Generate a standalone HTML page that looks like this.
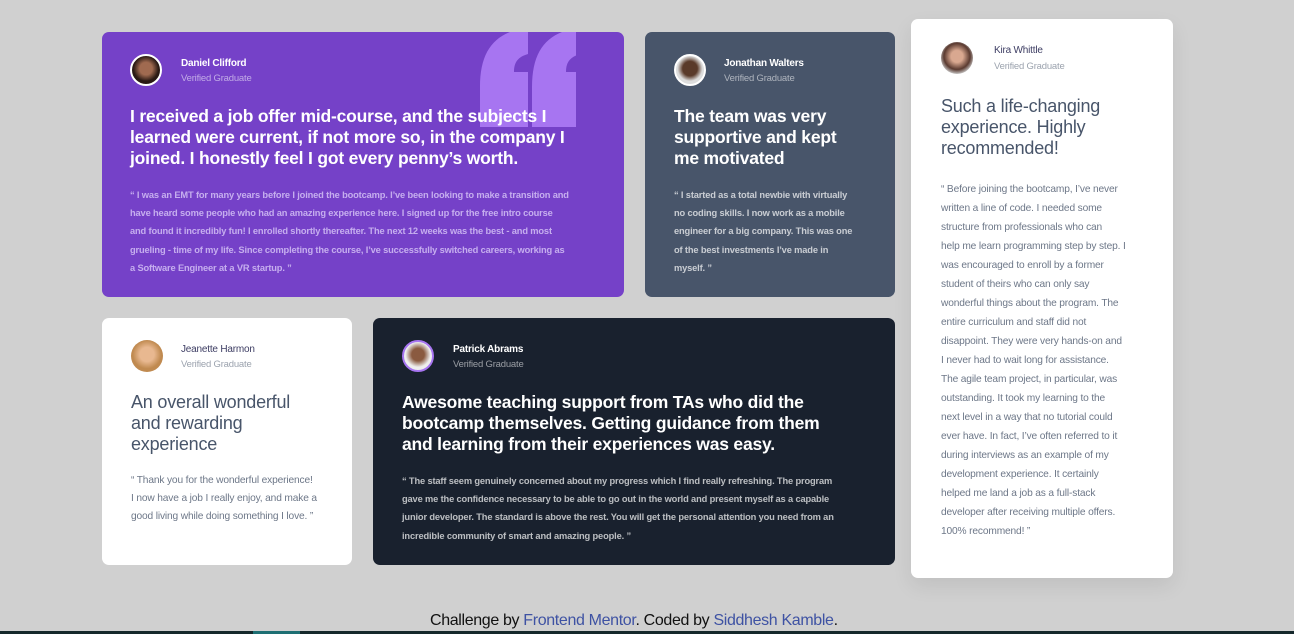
<!DOCTYPE html>
<html><head><meta charset="utf-8"><style>
*{margin:0;padding:0;box-sizing:border-box}
body{width:1294px;height:634px;background:#d0d0d0;font-family:"Liberation Sans",sans-serif;position:relative;overflow:hidden}
.c{position:absolute;border-radius:7px;overflow:hidden}
.av{position:absolute;width:32px;height:32px;border-radius:50%;border:2px solid #fff}
.nm{position:absolute;font-size:10px;font-weight:bold;white-space:nowrap;letter-spacing:-0.2px}
.vg{position:absolute;font-size:9.5px;white-space:nowrap;opacity:.55;letter-spacing:-0.2px}
.t{position:absolute;font-size:18px;line-height:21px;white-space:nowrap;letter-spacing:-0.2px}
.b{position:absolute;font-size:9.3px;line-height:18.2px;white-space:nowrap;opacity:.7;font-weight:bold;letter-spacing:-0.15px}
.w .t{color:#48556a;font-weight:normal}
.w .b{color:#48556a;font-weight:normal;opacity:.8;font-size:10.2px}
.w .nm{color:#3d3d63;font-weight:normal}
.w .vg{color:#48556a}
.d{color:#fff}
.d .t{font-weight:bold;font-size:17.5px}
</style></head><body>

<div class="c d" style="left:102px;top:32px;width:522px;height:265px;background:#7541c8">
<svg style="position:absolute;left:378px;top:0" width="96" height="95" viewBox="0 0 96 95"><path d="M0 95V55C0 25 10 8 30 0h18v22c-10 3-14 8-14 18h14v55z" fill="#a775f1"/><path d="M48 95V55c0-30 10-47 30-55h18v22c-10 3-14 8-14 18h14v55z" fill="#a775f1" transform="translate(4 0)"/></svg>
<div class="av" style="left:28px;top:22px;background:radial-gradient(circle at 50% 45%,#a06a50 30%,#2a1a14 60%)"></div>
<div class="nm" style="left:79px;top:26px">Daniel Clifford</div>
<div class="vg" style="left:79px;top:41px">Verified Graduate</div>
<div class="t" style="left:28px;top:74px">I received a job offer mid-course, and the subjects I<br>learned were current, if not more so, in the company I<br>joined. I honestly feel I got every penny’s worth.</div>
<div class="b" style="left:28px;top:154px;color:#e8dcff">“ I was an EMT for many years before I joined the bootcamp. I’ve been looking to make a transition and<br>have heard some people who had an amazing experience here. I signed up for the free intro course<br>and found it incredibly fun! I enrolled shortly thereafter. The next 12 weeks was the best - and most<br>grueling - time of my life. Since completing the course, I’ve successfully switched careers, working as<br>a Software Engineer at a VR startup. ”</div>
</div>

<div class="c d" style="left:645px;top:32px;width:250px;height:265px;background:#48556a">
<div class="av" style="left:29px;top:22px;background:radial-gradient(circle at 50% 45%,#5a3a2a 35%,#ddd 60%)"></div>
<div class="nm" style="left:79px;top:26px">Jonathan Walters</div>
<div class="vg" style="left:79px;top:41px">Verified Graduate</div>
<div class="t" style="left:29px;top:74px">The team was very<br>supportive and kept<br>me motivated</div>
<div class="b" style="left:29px;top:154px;color:#fff">“ I started as a total newbie with virtually<br>no coding skills. I now work as a mobile<br>engineer for a big company. This was one<br>of the best investments I’ve made in<br>myself. ”</div>
</div>

<div class="c w" style="left:911px;top:19px;width:262px;height:559px;background:#fff;box-shadow:0 8px 20px rgba(0,0,0,.08)">
<div class="av" style="left:30px;top:23px;border:none;background:radial-gradient(circle at 50% 45%,#d9a890 25%,#5a3a30 55%,#ccc 75%)"></div>
<div class="nm" style="left:83px;top:26px">Kira Whittle</div>
<div class="vg" style="left:83px;top:42px">Verified Graduate</div>
<div class="t" style="left:30px;top:77px">Such a life-changing<br>experience. Highly<br>recommended!</div>
<div class="b" style="left:30px;top:161px;line-height:19px">“ Before joining the bootcamp, I’ve never<br>written a line of code. I needed some<br>structure from professionals who can<br>help me learn programming step by step. I<br>was encouraged to enroll by a former<br>student of theirs who can only say<br>wonderful things about the program. The<br>entire curriculum and staff did not<br>disappoint. They were very hands-on and<br>I never had to wait long for assistance.<br>The agile team project, in particular, was<br>outstanding. It took my learning to the<br>next level in a way that no tutorial could<br>ever have. In fact, I’ve often referred to it<br>during interviews as an example of my<br>development experience. It certainly<br>helped me land a job as a full-stack<br>developer after receiving multiple offers.<br>100% recommend! ”</div>
</div>

<div class="c w" style="left:102px;top:318px;width:250px;height:247px;background:#fff">
<div class="av" style="left:29px;top:22px;border:none;background:radial-gradient(circle at 50% 45%,#e8b890 30%,#c08a50 60%)"></div>
<div class="nm" style="left:79px;top:26px">Jeanette Harmon</div>
<div class="vg" style="left:79px;top:41px">Verified Graduate</div>
<div class="t" style="left:29px;top:74px">An overall wonderful<br>and rewarding<br>experience</div>
<div class="b" style="left:29px;top:154px">“ Thank you for the wonderful experience!<br>I now have a job I really enjoy, and make a<br>good living while doing something I love. ”</div>
</div>

<div class="c d" style="left:373px;top:318px;width:522px;height:247px;background:#19212e">
<div class="av" style="left:29px;top:22px;border-color:#a775f1;background:radial-gradient(circle at 50% 45%,#8a5a40 30%,#eee 60%)"></div>
<div class="nm" style="left:80px;top:26px">Patrick Abrams</div>
<div class="vg" style="left:80px;top:41px">Verified Graduate</div>
<div class="t" style="left:29px;top:74px">Awesome teaching support from TAs who did the<br>bootcamp themselves. Getting guidance from them<br>and learning from their experiences was easy.</div>
<div class="b" style="left:29px;top:154px;color:#fff">“ The staff seem genuinely concerned about my progress which I find really refreshing. The program<br>gave me the confidence necessary to be able to go out in the world and present myself as a capable<br>junior developer. The standard is above the rest. You will get the personal attention you need from an<br>incredible community of smart and amazing people. ”</div>
</div>

<div style="position:absolute;left:430px;top:612px;white-space:nowrap;font-size:16px;color:#111;letter-spacing:-0.35px">Challenge by <span style="color:#3e52a3">Frontend Mentor</span>. Coded by <span style="color:#3e52a3">Siddhesh Kamble</span>.</div>
<div style="position:absolute;left:0;top:631px;width:1294px;height:3px;background:#15282b"></div>
<div style="position:absolute;left:253px;top:631px;width:47px;height:3px;background:#1d6f73"></div>
</body></html>
